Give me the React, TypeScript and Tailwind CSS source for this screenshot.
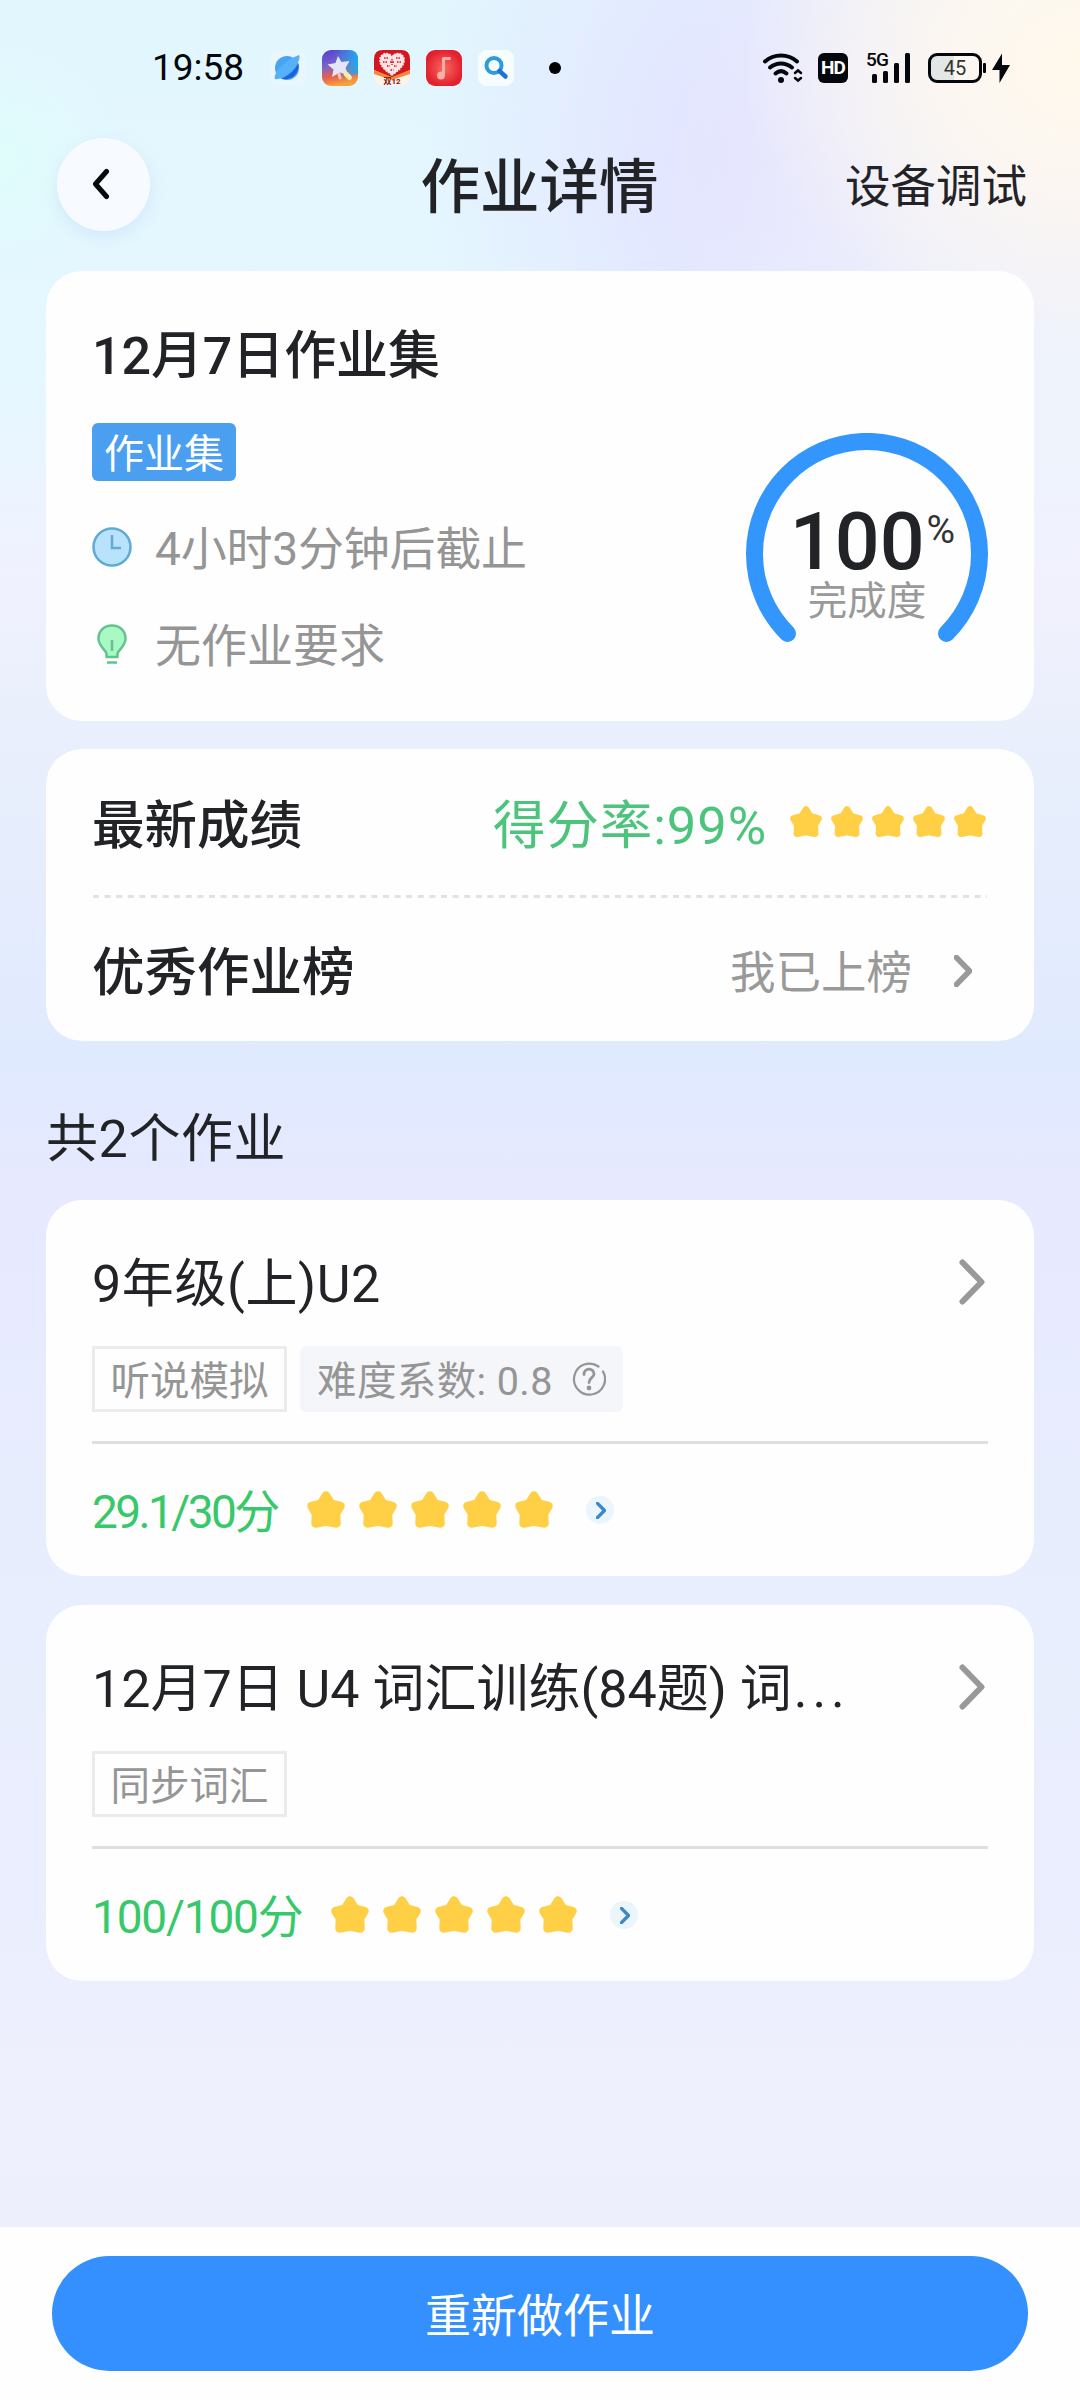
import React from 'react';

interface Homework {
  id: number;
  title: string;
  titleClass: string;
  truncated?: boolean;
  tag: string;
  difficulty?: string;
  score: string;
  scoreClass: string;
}

const homeworks: Homework[] = [
  { id: 1, title: '9年级(上)U2', titleClass: 'tracking-[0.6px]', tag: '听说模拟', difficulty: '0.8', score: '29.1/30分', scoreClass: 'tracking-[-2.6px] w-[185px]' },
  { id: 2, title: '12月7日 U4 词汇训练(84题) 词', titleClass: 'tracking-normal', truncated: true, tag: '同步词汇', score: '100/100分', scoreClass: 'tracking-[-1.2px] w-[209px]' },
];

const Star: React.FC<{ className: string }> = ({ className }) => (
  <svg viewBox="0 0 38 38" className={className}>
    <path
      d="M19 4.500 L24 12.500 L33.500 15 L29 22.500 L29.500 32.500 L19 30.500 L8.500 32.500 L9 22.500 L4.500 15 L14 12.500 Z"
      fill="#ffd045"
      stroke="#ffd045"
      strokeWidth="8.5"
      strokeLinejoin="round"
    />
  </svg>
);

const Chevron: React.FC<{ className: string; width?: number }> = ({ className, width = 6 }) => (
  <svg viewBox="0 0 26 46" fill="none" className={className}>
    <path d="M3.500 3.500 L22.500 23 L3.500 42.500" stroke="currentColor" strokeWidth={width} strokeLinecap="round" strokeLinejoin="round" />
  </svg>
);

const AppIcons: React.FC = () => (
  <div className="flex gap-4 ml-[27px]">
    <svg viewBox="0 0 36 36" className="w-9 h-9">
      <rect width="36" height="36" rx="9" fill="#eaf6fd" />
      <circle cx="17" cy="18" r="12" fill="#45a5f5" />
      <path d="M28.500 13 C30 24 21 31.500 11 28.500 C19 26 25 20 28.500 13 Z" fill="#1d63d8" />
      <path d="M5 29 C3 24 13 11 29 5 C31 8 27 17 19 23 C13 28 8 30 5 29 Z" fill="#55b1f8" />
    </svg>
    <svg viewBox="0 0 36 36" className="w-9 h-9">
      <defs>
        <linearGradient id="album" x1="0.1" y1="0" x2="0.3" y2="1">
          <stop offset="0" stopColor="#5a3fd0" />
          <stop offset="0.45" stopColor="#7a63c8" />
          <stop offset="0.75" stopColor="#e8604a" />
          <stop offset="1" stopColor="#f5a13c" />
        </linearGradient>
        <linearGradient id="albumSide" x1="0" y1="0" x2="1" y2="0">
          <stop offset="0.3" stopColor="#22a6ee" stopOpacity="0" />
          <stop offset="1" stopColor="#22a6ee" />
        </linearGradient>
      </defs>
      <rect width="36" height="36" rx="9" fill="url(#album)" />
      <path d="M9 0 H27 Q36 0 36 9 V24 L22 27 L0 20 V9 Q0 0 9 0 Z" fill="url(#albumSide)" />
      <path d="M16 6 L19.500 12 L27.500 11 L23.500 18 L26 25 L18 22.500 L10 27 L11.500 19.500 L5.500 14.500 L13.500 13 Z" fill="#e6e4fb" />
      <path d="M24 24 L27.500 27.500" stroke="#ffe9a8" strokeWidth="5" strokeLinecap="round" />
      <path d="M17 24 L18 28" stroke="#f8c8b8" strokeWidth="3" strokeLinecap="round" />
    </svg>
    <svg viewBox="0 0 36 36" className="w-9 h-9">
      <rect width="36" height="36" rx="9" fill="#fdf3ea" />
      <path d="M0 20 V9 Q0 0 9 0 H27 Q36 0 36 9 V20 L18 28 Z" fill="#d3161f" />
      <path d="M0 20 L18 27 L36 20 V24 L18 30 L0 24 Z" fill="#f08a3a" />
      <path d="M18 25 C9 19 5 14 6 8.500 C7.500 2.500 15 2 18 6.500 C21 2 28.500 2.500 30 8.500 C31 14 27 19 18 25 Z" fill="#fbe4e4" stroke="#fbe4e4" strokeWidth="1.5" strokeDasharray="2 1" />
      <path d="M10 8 h4 M22 8 h4 M9 12 h4 M23 12 h4 M16 12 h4 M13 16 h3 M20 16 h3 M16.500 20 h3 M18 9 v6" stroke="#d3161f" strokeWidth="1.4" strokeDasharray="1.5 1" />
      <text x="18" y="34" textAnchor="middle" fontSize="8" fontWeight="700" fill="#7d1a12">双12</text>
    </svg>
    <svg viewBox="0 0 36 36" className="w-9 h-9">
      <defs>
        <radialGradient id="music">
          <stop offset="0" stopColor="#f96a60" />
          <stop offset="1" stopColor="#e3202f" />
        </radialGradient>
      </defs>
      <rect width="36" height="36" rx="9" fill="url(#music)" />
      <path d="M17.500 25 V8.500 H24.500" stroke="#fbb0a4" strokeWidth="3" fill="none" strokeLinejoin="round" />
      <circle cx="15" cy="25.500" r="4" fill="#fbb0a4" />
    </svg>
    <svg viewBox="0 0 36 36" className="w-9 h-9">
      <rect width="36" height="36" rx="9" fill="#f6fdff" />
      <circle cx="16" cy="15.500" r="7.500" fill="none" stroke="#2f9bd8" strokeWidth="4" />
      <path d="M21.500 21 L27.500 26.500" stroke="#2173cf" strokeWidth="4.500" strokeLinecap="round" />
    </svg>
  </div>
);

const StatusBar: React.FC = () => (
  <div className="flex items-center h-[136px] pl-[152px] pr-[68px] text-[#04080d]">
    <span className="text-[37px] leading-[44px] w-[91px] whitespace-nowrap">19:58</span>
    <AppIcons />
    <span className="w-3 h-3 rounded-full bg-black ml-[35px]" />
    <div className="flex items-center ml-auto">
      <svg viewBox="0 0 40 30" className="w-10 h-[30px]" fill="none" stroke="currentColor" strokeWidth="4" strokeLinecap="round">
        <path d="M2 8.500 C11 0.500 25 0.500 34 8.500" />
        <path d="M7 14.500 C13.500 9 22.500 9 29 14.500" />
        <path d="M12.500 20.500 C16 17.500 20 17.500 23.500 20.500" />
        <circle cx="18" cy="27" r="3" fill="currentColor" stroke="none" />
        <path d="M32 20 L35 17.500 L38 20 M32 25 L35 27.500 L38 25" strokeWidth="2.5" />
      </svg>
      <span className="w-[30px] h-[30px] rounded-md bg-[#04080d] text-white text-[19px] font-bold leading-[30px] text-center tracking-[-0.8px] ml-[15px]">HD</span>
      <div className="relative w-[46px] h-[30px] ml-[18px]">
        <span className="absolute left-0 -top-1 text-[19px] leading-[22px] font-medium tracking-[-0.8px]">5G</span>
        <svg viewBox="0 0 46 30" className="w-full h-full" fill="currentColor">
          <rect x="6" y="21" width="5" height="9" rx="1.5" />
          <rect x="17" y="18" width="5" height="12" rx="1.5" />
          <rect x="28" y="10" width="5" height="20" rx="1.5" />
          <rect x="39" y="0" width="5" height="30" rx="1.5" />
        </svg>
      </div>
      <svg viewBox="0 0 84 30" className="w-[84px] h-[30px] ml-[16px]">
        <path d="M8 2 H26 V28 H8 Q2 28 2 22 V8 Q2 2 8 2 Z" fill="#e2e6e4" />
        <rect x="1.5" y="1.5" width="51" height="27" rx="7.5" fill="none" stroke="#04080d" strokeWidth="3" />
        <rect x="55" y="10" width="3" height="10" rx="1" fill="#04080d" />
        <text x="27" y="22" textAnchor="middle" fontSize="20" fill="#333">45</text>
        <path d="M74 0.500 L64 17 H71.500 V30 L82 12 H74 Z" fill="#04080d" />
      </svg>
    </div>
  </div>
);

const Header: React.FC = () => (
  <div className="flex items-center justify-between h-[94px] pt-[2px] pl-[57px] pr-[53px]">
    <button className="w-[93px] h-[93px] rounded-full bg-[#f7fbff] shadow-[0_6px_16px_rgba(150,180,230,0.2)] flex items-center justify-center">
      <svg viewBox="0 0 20 32" className="w-5 h-8 mr-1.5" fill="none">
        <path d="M15.500 3.500 L4.500 16 L15.500 28.500" stroke="#08090b" strokeWidth="5" strokeLinecap="round" strokeLinejoin="round" />
      </svg>
    </button>
    <h1 className="text-[59.5px] leading-[64px] pt-[8px] ml-[84px] font-medium whitespace-nowrap">作业详情</h1>
    <span className="text-[45.5px] leading-[50px] pt-[8px] whitespace-nowrap">设备调试</span>
  </div>
);

const SummaryCard: React.FC = () => (
  <div className="bg-[#fefefe] rounded-[36px] h-[450px] mt-[41px] px-[46px] pt-[60px] flex justify-between">
    <div>
      <h2 className="text-[52px] leading-[52px] font-medium tracking-[-0.1px]">12月7日作业集</h2>
      <span className="flex items-center justify-center w-36 h-[58px] pt-[5px] mt-[40px] rounded-md bg-[#4a9ff0] text-white text-[40px] leading-none">作业集</span>
      <div className="flex items-center h-12 mt-[42px] text-[#959595]">
        <svg viewBox="0 0 40 40" className="w-10 h-10" fill="none" stroke="#5fabd3" strokeWidth="2.5">
          <circle cx="20" cy="20" r="18.5" fill="#b9e2fd" />
          <path d="M20 8 V21 H29" />
        </svg>
        <span className="text-[46px] leading-[46px] pt-1 ml-[23px] tracking-[-0.2px]">4小时3分钟后截止</span>
      </div>
      <div className="flex items-center h-12 mt-[49px] text-[#959595]">
        <svg viewBox="0 0 40 40" className="w-10 h-10" fill="none" stroke="#63c390" strokeWidth="2.5">
          <path d="M14.500 33 V29.500 C14 26 6.500 22.500 6.500 14.500 C6.500 7 12 1.500 20 1.500 C28 1.500 33.500 7 33.500 14.500 C33.500 22.500 26 26 25.500 29.500 V33 Z" fill="#a9f9c3" strokeLinejoin="round" />
          <path d="M20 16 V27 M15 38.500 H25" />
        </svg>
        <span className="text-[46px] leading-[46px] pt-1 ml-[23px]">无作业要求</span>
      </div>
    </div>
    <div className="relative w-[242px] h-[242px] mt-[102px]">
      <svg viewBox="0 0 242 242" className="w-full h-full" fill="none">
        <path d="M41.500 200.500 A112.500 112.500 0 1 1 200.500 200.500" stroke="#3396fc" strokeWidth="17" strokeLinecap="round" />
      </svg>
      <div className="absolute inset-0 flex flex-col items-center pt-[77px]">
        <div className="flex items-start h-[64px] ml-[11px]">
          <span className="text-[79px] leading-[64px] font-medium">100</span>
          <span className="text-[39px] leading-[40px] ml-[2px] text-[#333]">%</span>
        </div>
        <span className="text-[39.5px] leading-[40px] mt-[8px] text-[#999]">完成度</span>
      </div>
    </div>
  </div>
);

const ResultCard: React.FC = () => (
  <div className="bg-[#fefefe] rounded-[36px] h-[292px] mt-7 px-[46px]">
    <div className="flex items-center h-[146px]">
      <span className="text-[52.5px] leading-[56px] pt-[7px] font-medium">最新成绩</span>
      <span className="text-[52.5px] leading-[56px] pt-[7px] tracking-[0.9px] text-[#4cc47c] ml-auto">得分率:99%</span>
      <div className="flex gap-[9px] ml-[23px] mr-[2px]">
        {[1, 2, 3, 4, 5].map(n => (
          <Star key={n} className="w-8 h-8" />
        ))}
      </div>
    </div>
    <svg viewBox="0 0 896 3" className="w-full h-[3px]">
      <path d="M1 1.500 H895" stroke="#e2e2e4" strokeWidth="3" strokeDasharray="6 5.6" />
    </svg>
    <div className="flex items-center h-[146px]">
      <span className="text-[52.5px] leading-[56px] pt-[4px] font-medium">优秀作业榜</span>
      <span className="text-[45.5px] leading-[50px] pt-[5px] text-[#999] ml-auto">我已上榜</span>
      <Chevron className="w-[18px] h-8 ml-[42px] mr-[16px] text-[#999]" width={8} />
    </div>
  </div>
);

const HomeworkCard: React.FC<{ item: Homework }> = ({ item }) => (
  <div className="bg-[#fefefe] rounded-[36px] h-[376px] px-[46px] pt-[56px]">
    <div className="flex items-center h-[52px]">
      <h3 className={`text-[52px] leading-[52px] pt-[5px] whitespace-nowrap ${item.titleClass}`}>
        {item.title}
        {item.truncated && <span className="tracking-[5px] ml-[2px]">...</span>}
      </h3>
      <Chevron className="w-[26px] h-[46px] ml-auto mr-[3px] text-[#999]" />
    </div>
    <div className="flex gap-[13px] h-[66px] mt-[38px] text-[39.5px] leading-none text-[#959595]">
      <span className="flex items-center justify-center w-[195px] pt-[5px] border-[3px] border-[#ebebeb]">{item.tag}</span>
      {item.difficulty && (
        <span className="flex items-center w-[323px] pl-[17px] bg-[#f5f6fa] rounded-md whitespace-nowrap">
          <span className="pt-[5px] tracking-[0.4px]">难度系数: {item.difficulty}</span>
          <svg viewBox="0 0 34 34" className="w-[34px] h-[34px] ml-auto mr-[17px]" fill="none" stroke="currentColor" strokeWidth="2.2" strokeLinecap="round">
            <path d="M31 9.500 A15.500 15.500 0 1 1 26.500 4.500" />
            <path d="M12 12.500 C12 5.500 22 5.500 22 12 C22 15.500 17 16 17 20.500" strokeWidth="2.8" />
            <circle cx="17" cy="26" r="1.3" fill="currentColor" />
          </svg>
        </span>
      )}
    </div>
    <div className="h-[3px] mt-[29px] bg-[#dfdfe1]" />
    <div className="flex items-center h-[132px]">
      <span className={`text-[46px] leading-[50px] pt-[4px] whitespace-nowrap text-[#37c86a] ${item.scoreClass}`}>{item.score}</span>
      <div className="flex gap-[14px] ml-[30px]">
        {[1, 2, 3, 4, 5].map(n => (
          <Star key={n} className="w-[38px] h-[38px]" />
        ))}
      </div>
      <span className="flex items-center justify-center w-7 h-7 rounded-full bg-[#ebf5fc] ml-[33px]">
        <Chevron className="w-[10px] h-[17px] ml-0.5 text-[#3b86cc]" width={9} />
      </span>
    </div>
  </div>
);

const App: React.FC = () => {
  return (
    <div className="w-[1080px] h-[2400px] flex flex-col overflow-hidden text-[#222326] font-[Roboto,'Noto_Sans_CJK_SC',sans-serif] bg-[radial-gradient(ellipse_340px_280px_at_1080px_60px,#fff9ec_0,rgba(253,247,240,0.9)_40%,rgba(250,246,248,0)_100%),radial-gradient(ellipse_420px_560px_at_1080px_200px,#f3f1fa_0,rgba(240,240,252,0)_100%),radial-gradient(ellipse_340px_420px_at_760px_160px,#e3e3ff_0,rgba(227,229,255,0.85)_35%,rgba(227,240,255,0)_100%),radial-gradient(circle_at_0_160px,#dffcfa_0,rgba(226,248,253,0)_120px),linear-gradient(180deg,#e2f6fe_0,#e5f7ff_380px,#f0f1fe_580px,#e9effc_740px,#e0eafe_1060px,#e7e9ff_1200px,#e8eefd_1590px,#ebeefe_1900px,#eef0fd_2100px,#eeeffc_2230px)]">
      <StatusBar />
      <Header />
      <div className="px-[46px] flex-1">
        <SummaryCard />
        <ResultCard />
        <h2 className="text-[52px] leading-[52px] mt-[73px] mb-[34px] tracking-[0.6px]">共2个作业</h2>
        <div className="flex flex-col gap-[29px]">
          {homeworks.map(item => (
            <HomeworkCard key={item.id} item={item} />
          ))}
        </div>
      </div>
      <div className="h-[173px] bg-[#fefefe] px-[52px] pt-[29px]">
        <button className="w-full h-[115px] pt-[5px] rounded-full bg-[#348fff] text-white text-[46px] leading-none">重新做作业</button>
      </div>
    </div>
  );
};

export default App;
